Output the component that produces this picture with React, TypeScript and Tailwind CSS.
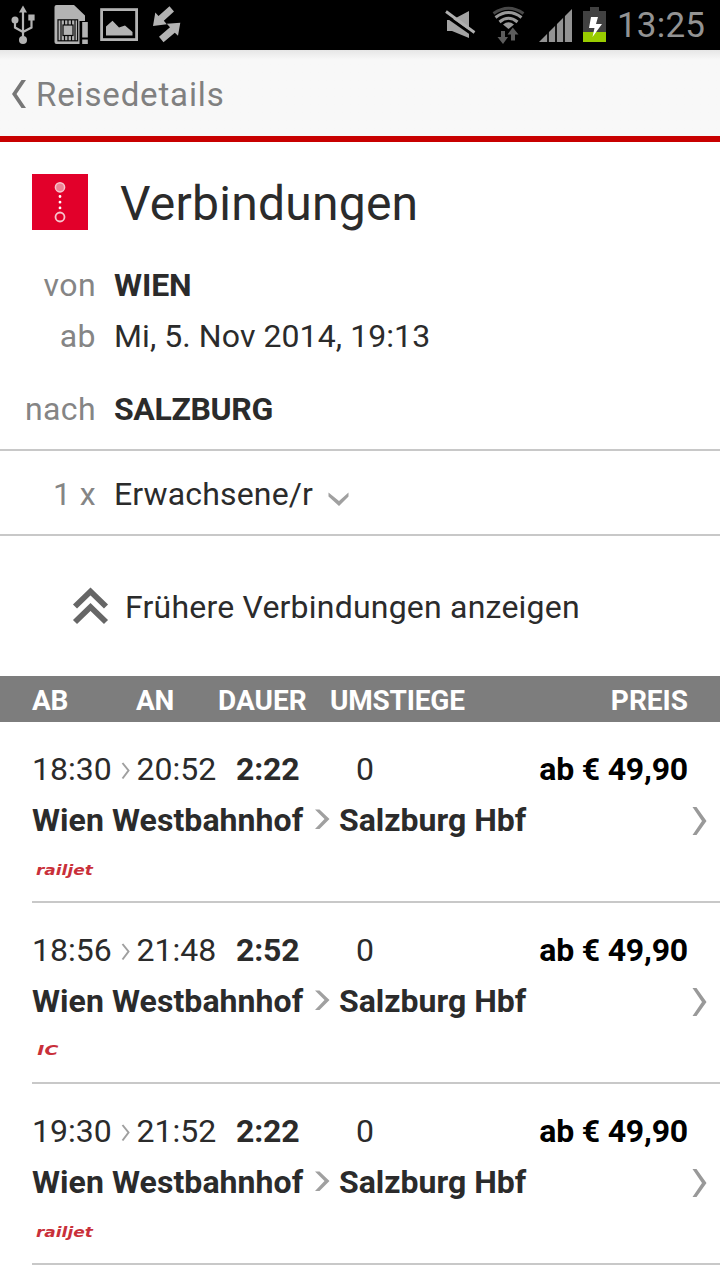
import React from "react";

type Connection = {
  from: string;
  to: string;
  duration: string;
  changes: number;
  train: "railjet" | "IC";
};

const connections: Connection[] = [
  { from: "18:30", to: "20:52", duration: "2:22", changes: 0, train: "railjet" },
  { from: "18:56", to: "21:48", duration: "2:52", changes: 0, train: "IC" },
  { from: "19:30", to: "21:52", duration: "2:22", changes: 0, train: "railjet" },
];

function StatusBar() {
  return (
    <div className="flex h-[50px] items-center justify-between bg-black">
      <svg width="200" height="50" viewBox="0 0 200 50" fill="#b3b3b3">
        <path d="M23 5.5l4 7h-8z" />
        <path d="M23 10v30M15 21v6.5l8 4.500M31.500 19v8.500l-8.500 4.500" fill="none" stroke="#b3b3b3" strokeWidth="2.200" />
        <circle cx="15" cy="20" r="3.500" />
        <circle cx="23" cy="40" r="4" />
        <rect x="28.300" y="14.500" width="6.300" height="6" />
        <path d="M56.500 5h17.500l11 10.500V21h-4v23H56.500a2 2 0 0 1-2-2V7a2 2 0 0 1 2-2z" />
        <g fill="none" stroke="#0a0a0a" strokeWidth="1.200">
          <rect x="58" y="19.800" width="19.600" height="21" />
          <rect x="63" y="25" width="10" height="10.500" />
          <path d="M61 20v21M75 20v21M64.500 20v5M68 20v5M71.500 20v5M64.500 35v6M68 35v6M71.500 35v6" />
        </g>
        <path d="M79.500 21H89v24h-9.500z" fill="#000" />
        <rect x="82.200" y="22" width="5.600" height="15.500" />
        <rect x="82.200" y="39.500" width="5.600" height="4.500" />
        <rect x="101.600" y="9.600" width="35" height="30" fill="none" stroke="#b3b3b3" strokeWidth="2.800" />
        <path d="M106 35.500v-9l6.500-5.700 6.500 6.700 6-2 7.500 6.500v3.500z" />
        <path d="M169.500 6.300l4.500 5.200-10.200 9.300 3 3.500-13.800 1.700 2.300-13.500 3.200 3.500z" />
        <path d="M180.300 22.800l-2.300 13-3.200-3-11.300 9.500-4.500-5.500 11-9.500-3.200-3.500z" />
      </svg>
      <div className="flex h-[50px] items-center">
        <svg width="180" height="50" viewBox="437 0 180 50">
          <path d="M447 20h5l17-9v27l-17-7h-5z" fill="#a3a3a3" />
          <path d="M444 14.500l30 21" stroke="#000" strokeWidth="3" />
          <path d="M446 11.500l28.500 21" stroke="#b0b0b0" strokeWidth="2.800" />
          <g fill="none" strokeWidth="3">
            <path d="M493.500 13.500Q508.500 3 523.500 13.500" stroke="#484848" />
            <path d="M495.500 17.500Q508.500 7.500 521.500 17.500" stroke="#999" />
            <path d="M499.500 22Q508.500 14.500 517.500 22" stroke="#999" />
          </g>
          <path d="M503 24.500Q508.500 20 514 24.500L508.500 29z" fill="#999" />
          <path d="M501 31h4v6h3l-5 7-5.500-7h3.500zM511 40.500v-6h-3.500l5.300-7 5.700 7H515v6z" fill="#5c5c5c" />
          <path d="M539 42L572 9v33z" fill="#939393" />
          <path d="M548 20v23M556 16v27M564 10v33" stroke="#000" strokeWidth="1.700" />
          <path d="M590 7h9v4h7v31h-23V11h7z" fill="#414141" />
          <path d="M583 32h23v10h-23z" fill="#99cc00" />
          <path d="M591 17h7l-2 7h6l-9.500 13 2-9H589z" fill="#fff" />
        </svg>
        <span className="w-[103px] pt-[1px] text-[35px] font-normal leading-[50px] tracking-[0.2px] text-[#939393]">13:25</span>
      </div>
    </div>
  );
}

function Header() {
  return (
    <header className="flex h-[92px] items-center border-b-[6px] border-[#c80000] bg-[#f7f7f7] bg-linear-to-b from-[#e6e6e6] to-[#f8f8f8] to-[10px] pl-[11px]">
      <svg className="mt-[2px]" width="16" height="30" viewBox="0 0 16 30" fill="#777">
        <path d="M10.500 1h4.500L5.500 15 15 29h-4.500L1 15z" />
      </svg>
      <h1 className="pl-[9px] pt-[3px] text-[33px] leading-[83px] tracking-[0.85px] text-[#808080]">Reisedetails</h1>
    </header>
  );
}

function Field({ label, children }: { label: string; children: React.ReactNode }) {
  return (
    <div className="flex h-[51px] items-center text-[32px] leading-[51px]">
      <span className="w-24 shrink-0 text-right tracking-[0.4px] text-[#858585]">{label}</span>
      <div className="flex items-center pl-[18px] text-[#2b2b2b]">{children}</div>
    </div>
  );
}

function Row({ c }: { c: Connection }) {
  return (
    <li className="ml-8 h-[181px] border-b-2 border-[#c8c8c8] pt-[22px] text-[32px] leading-[51px] text-[#2b2b2b]">
      <div className="flex h-[51px]">
        <span className="w-[88px]">{c.from}</span>
        <svg width="16" height="51" viewBox="0 0 16 51" fill="none" stroke="#a0a0a0" strokeWidth="2">
          <path d="M2.500 19l6 7.500-6 8" />
        </svg>
        <span className="w-[100px] pl-[0.5px]">{c.to}</span>
        <b className="w-[120px] tracking-[-0.2px]">{c.duration}</b>
        <span>{c.changes}</span>
        <b className="ml-auto mr-8 tracking-[-0.2px] text-black">ab € 49,90</b>
      </div>
      <div className="flex h-[51px] items-center">
        <b className="w-[282px] whitespace-nowrap tracking-[0.07px]">Wien Westbahnhof</b>
        <svg width="25" height="51" viewBox="0 0 25 51" fill="#a0a0a0">
          <path d="M1 14.500h4.500l10 9.500-10 10H1l9.500-10z" />
        </svg>
        <b className="whitespace-nowrap">Salzburg Hbf</b>
        <svg className="ml-auto mr-3" width="18" height="30" viewBox="0 0 18 30" fill="#999">
          <path d="M2.500 1h4l10 14-10 14h-4L12 15z" />
        </svg>
      </div>
      <div className="flex h-[48px] items-center pl-1 font-['DejaVu_Sans'] text-[14px] font-bold italic leading-none text-[#c9303a]">
        {c.train === "railjet" ? (
          <span className="origin-left scale-x-[1.21]">railjet</span>
        ) : (
          <span className="origin-left scale-x-[1.35] pb-[2px] pl-[1px]">IC</span>
        )}
      </div>
    </li>
  );
}

export default function App() {
  return (
    <div className="h-[1280px] w-[720px] overflow-hidden bg-white font-[Roboto,sans-serif]">
      <StatusBar />
      <Header />
      <section className="h-[309px] border-b-2 border-[#c8c8c8] pt-8">
        <div className="flex h-14 items-center pl-8">
          <svg width="56" height="56" viewBox="0 0 56 56">
            <path d="M0 0h56v56H0z" fill="#e2002a" />
            <circle cx="28" cy="13.300" r="4.600" fill="#ee8296" stroke="#f7c4cc" strokeWidth="1.500" />
            <circle cx="28" cy="43" r="4.500" fill="none" stroke="#f7c4cc" strokeWidth="1.800" />
            <path d="M28 22.500v12" stroke="#fff" strokeWidth="2.800" strokeLinecap="round" strokeDasharray="0 5.700" />
          </svg>
          <h2 className="pl-8 pt-[4px] text-[48px] leading-[56px] tracking-[0.25px] text-[#2b2b2b]">Verbindungen</h2>
        </div>
        <div className="pt-[30px]">
          <Field label="von"><b className="tracking-[-0.1px]">WIEN</b></Field>
          <Field label="ab"><span className="tracking-[0.08px]">Mi, 5. Nov 2014, 19:13</span></Field>
          <div className="pt-[22px]">
            <Field label="nach"><b className="tracking-[-0.35px]">SALZBURG</b></Field>
          </div>
        </div>
      </section>
      <section className="flex h-[85px] items-center border-b-2 border-[#c8c8c8] pt-[4px]">
        <Field label="1 x">
          <span className="tracking-[0.15px]">Erwachsene/r</span>
          <svg className="ml-[14px] mt-[9px]" width="24" height="16" viewBox="0 0 24 16" fill="#a0a0a0">
            <path d="M1.500 1.500v4L12 15l9.500-9.500v-4L12 10z" />
          </svg>
        </Field>
      </section>
      <section className="flex h-[140px] items-center pl-[72px]">
        <svg width="37" height="40" viewBox="0 0 37 40" fill="none" stroke="#666" strokeWidth="5.800">
          <path d="M3 20.500l15.500-15 15.500 15M3 36l15.500-15L34 36" />
        </svg>
        <span className="pl-4 pt-[2px] text-[32px] leading-[51px] tracking-[0.21px] text-[#2b2b2b]">Frühere Verbindungen anzeigen</span>
      </section>
      <div className="flex h-[46px] bg-[#7d7d7d] px-8 pt-[2px] text-[28px] font-bold leading-[46px] text-white">
        <span className="w-[104px] tracking-[-0.2px]">AB</span>
        <span className="w-[82px] tracking-[-0.2px]">AN</span>
        <span className="w-[112px]">DAUER</span>
        <span className="tracking-[-0.2px]">UMSTIEGE</span>
        <span className="ml-auto">PREIS</span>
      </div>
      <ul>
        {connections.map((c) => (
          <Row key={c.from} c={c} />
        ))}
      </ul>
    </div>
  );
}
